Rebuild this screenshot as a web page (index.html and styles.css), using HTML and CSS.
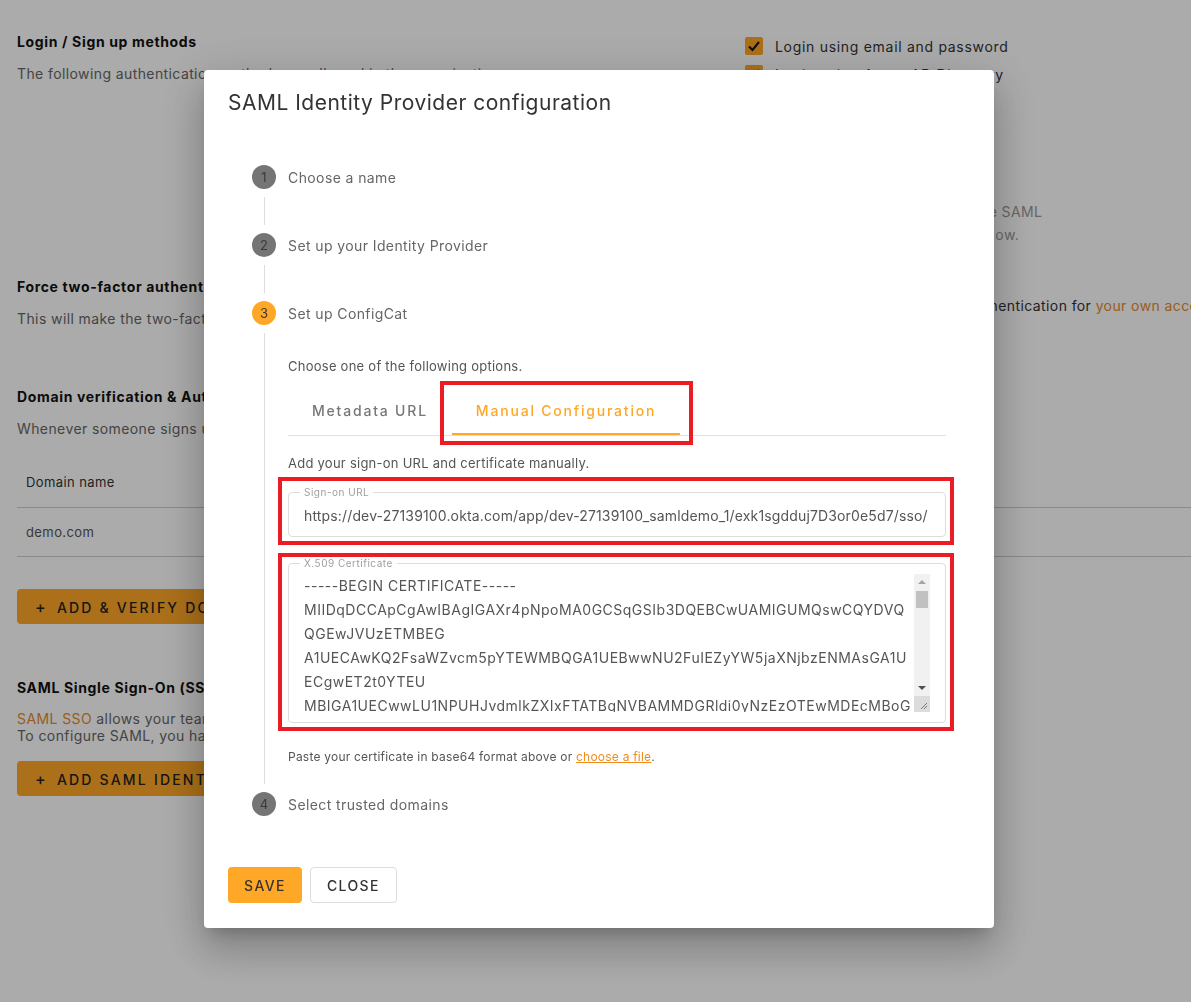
FILE: index.html
```html
<!DOCTYPE html>
<html lang="en">
<head>
  <meta charset="UTF-8" />
  <meta name="viewport" content="width=device-width, initial-scale=1.0"/>
  <title>Authentication settings</title>
  <link rel="stylesheet" href="styles.css">
</head>
<body>

  <!-- Settings page behind the dialog -->
  <div class="page">
    <section class="setting first">
      <div class="setting-info">
        <h4>Login / Sign up methods</h4>
        <p>The following authentication methods are allowed in the organization.</p>
      </div>
      <div class="setting-options">
        <label class="check">
          <span class="box"><svg viewBox="0 0 18 18"><polyline points="4,9.5 7.5,13 14,5"/></svg></span>
          Login using email and password
        </label>
        <label class="check">
          <span class="box"><svg viewBox="0 0 18 18"><polyline points="4,9.5 7.5,13 14,5"/></svg></span>
          Login using Azure AD Directory
        </label>
        <label class="check">
          <span class="box"><svg viewBox="0 0 18 18"><polyline points="4,9.5 7.5,13 14,5"/></svg></span>
          Login using Google
        </label>
        <label class="check">
          <span class="box"><svg viewBox="0 0 18 18"><polyline points="4,9.5 7.5,13 14,5"/></svg></span>
          Login using GitHub
        </label>
        <p class="note">Members from verified domains use SAML<br>SSO, so you can configure them below.</p>
      </div>
    </section>

    <section class="setting second">
      <div class="setting-info">
        <h4>Force two-factor authentication</h4>
        <p>This will make the two-factor authentication mandatory for every member of the organization.</p>
      </div>
      <div class="setting-options">
        <p class="plain">You can also enable two-factor authentication for <a href="#">your own account</a> first.</p>
      </div>
    </section>

    <section class="block">
      <h4>Domain verification &amp; Auto-assign</h4>
      <p>Whenever someone signs up with an email address from a verified domain, they will be added to the organization.</p>
      <div class="domain-table">
        <div class="domain-head">Domain name</div>
        <div class="domain-row">demo.com</div>
      </div>
      <button class="page-btn"><span class="plus">+</span>ADD &amp; VERIFY DOMAIN</button>
    </section>

    <section class="block saml">
      <h4>SAML Single Sign-On (SSO)</h4>
      <p class="tight"><a href="#">SAML SSO</a> allows your team members to log in to ConfigCat through your Identity Provider.<br>To configure SAML, you have to verify at least one domain first.</p>
      <button class="page-btn"><span class="plus">+</span>ADD SAML IDENTITY PROVIDER</button>
    </section>
  </div>

  <div class="backdrop"></div>

  <!-- SAML dialog -->
  <div class="dialog">
    <h2 class="dialog-title">SAML Identity Provider configuration</h2>

    <div class="stepper">
      <div class="step-head">
        <span class="step-num">1</span>
        <span>Choose a name</span>
      </div>
      <div class="step-line"></div>

      <div class="step-head">
        <span class="step-num">2</span>
        <span>Set up your Identity Provider</span>
      </div>
      <div class="step-line"></div>

      <div class="step-head">
        <span class="step-num active">3</span>
        <span>Set up ConfigCat</span>
      </div>
      <div class="step-body">
        <p class="hint">Choose one of the following options.</p>

        <div class="tabs">
          <div class="tab">Metadata URL</div>
          <div class="tab active">Manual Configuration<span class="mark"></span></div>
        </div>

        <p class="hint gap">Add your sign-on URL and certificate manually.</p>

        <div class="annotated url">
          <fieldset class="field">
            <legend>Sign-on URL</legend>
            <div class="field-value">https://dev-27139100.okta.com/app/dev-27139100_samldemo_1/exk1sgdduj7D3or0e5d7/sso/</div>
          </fieldset>
          <span class="mark"></span>
        </div>

        <div class="annotated cert">
          <fieldset class="field area">
            <legend>X.509 Certificate</legend>
            <div class="area-wrap">
              <div class="area-text">-----BEGIN CERTIFICATE-----
MIIDqDCCApCgAwIBAgIGAXr4pNpoMA0GCSqGSIb3DQEBCwUAMIGUMQswCQYDVQ
QGEwJVUzETMBEG
A1UECAwKQ2FsaWZvcm5pYTEWMBQGA1UEBwwNU2FuIEZyYW5jaXNjbzENMAsGA1U
ECgwET2t0YTEU
MBIGA1UECwwLU1NPUHJvdmlkZXIxFTATBgNVBAMMDGRldi0yNzEzOTEwMDEcMBoG</div>
              <div class="scrollbar">
                <span class="arrow up"></span>
                <span class="thumb"></span>
                <span class="track"></span>
                <span class="arrow down"></span>
                <span class="grip">
                  <svg viewBox="0 0 16 16"><line x1="13" y1="7" x2="7" y2="13"/><line x1="13" y1="10" x2="10" y2="13"/></svg>
                </span>
              </div>
            </div>
          </fieldset>
          <span class="mark"></span>
        </div>

        <p class="small">Paste your certificate in base64 format above or <a href="#">choose a file</a>.</p>
      </div>

      <div class="step-head">
        <span class="step-num">4</span>
        <span>Select trusted domains</span>
      </div>
    </div>

    <div class="actions">
      <button class="btn save">SAVE</button>
      <button class="btn close">CLOSE</button>
    </div>
  </div>

</body>
</html>
```

FILE: styles.css
```css
* {
  box-sizing: border-box;
  margin: 0;
  padding: 0;
  font-family: 'Inter', 'Noto Sans', sans-serif;
}

body {
  width: 1191px;
  height: 1002px;
  overflow: hidden;
  background: #fff;
  color: #333;
  font-size: 14px;
}

a {
  color: #f08c1e;
}

/* Page behind */
.page {
  width: 1191px;
  height: 1002px;
  overflow: hidden;
  padding: 32px 0 0 17px;
  letter-spacing: 0.4px;
}

.page h4 {
  font-size: 14px;
  font-weight: 700;
  line-height: 20px;
  color: #111;
  letter-spacing: 0.65px;
  white-space: nowrap;
}

.page p {
  margin-top: 12px;
  line-height: 20px;
  color: #666;
  white-space: nowrap;
}

.page a {
  color: #e58a2e;
  text-decoration: none;
}

.setting {
  display: grid;
  grid-template-columns: 728px 1fr;
}

.setting.second {
  margin-top: 31px;
}

.setting.second .setting-options {
  padding-top: 19px;
}

.check {
  display: flex;
  align-items: center;
  gap: 12px;
  height: 28px;
  color: #333;
  letter-spacing: 0.7px;
  white-space: nowrap;
}

.check .box {
  width: 18px;
  height: 18px;
  border-radius: 2px;
  background: #ffa726;
  display: flex;
}

.check svg {
  width: 18px;
  height: 18px;
  fill: none;
  stroke: #111;
  stroke-width: 2;
}

.setting-options .note {
  margin-top: 56px;
  line-height: 23px;
  color: #999;
}

.setting-options .plain {
  margin-top: 0;
  color: #333;
}

.block {
  margin-top: 58px;
}

.domain-table {
  margin-top: 18px;
  font-size: 13px;
}

.domain-head {
  height: 51px;
  line-height: 50px;
  padding-left: 9px;
  color: #333;
  border-bottom: 1px solid #ccc;
}

.domain-row {
  height: 49px;
  line-height: 48px;
  padding-left: 9px;
  color: #555;
  border-bottom: 1px solid #ccc;
}

.page-btn {
  margin-top: 32px;
  height: 35px;
  padding: 0 18px;
  border: none;
  border-radius: 4px;
  background: #ffa726;
  color: #222;
  font-size: 14px;
  font-weight: 500;
  letter-spacing: 2.2px;
  white-space: nowrap;
}

.page-btn .plus {
  margin-right: 9px;
  font-size: 16px;
}

.block.saml {
  margin-top: 54px;
}

.page p.tight {
  line-height: 17px;
}

.saml .page-btn {
  margin-top: 17px;
}

.backdrop {
  position: fixed;
  inset: 0;
  background: rgba(0, 0, 0, 0.33);
}

/* Dialog */
.dialog {
  position: fixed;
  left: 204px;
  top: 70px;
  width: 790px;
  height: 858px;
  padding: 17px 24px 25px;
  background: #fff;
  border-radius: 4px;
  box-shadow: 0 11px 15px -7px rgba(0,0,0,0.2), 0 24px 38px 3px rgba(0,0,0,0.14), 0 9px 46px 8px rgba(0,0,0,0.12);
}

.dialog-title {
  font-size: 21px;
  font-weight: 400;
  line-height: 32px;
  letter-spacing: 0.5px;
  color: #333;
  margin-bottom: 22px;
}

.stepper {
  padding: 24px;
}

.step-head {
  display: flex;
  align-items: center;
  gap: 12px;
  height: 24px;
  color: #666;
  font-size: 14px;
  letter-spacing: 0.4px;
}

.step-num {
  flex: none;
  width: 24px;
  height: 24px;
  border-radius: 50%;
  background: #757575;
  color: #3a3a3a;
  font-size: 13px;
  letter-spacing: 0;
  display: flex;
  align-items: center;
  justify-content: center;
}

.step-num.active {
  background: #ffa726;
}

.step-line {
  margin: 8px 0 8px 12px;
  height: 28px;
  border-left: 1px solid #ddd;
}

.step-body {
  margin: 8px 0 8px 12px;
  padding: 23px 0 18px 23px;
  border-left: 1px solid #ddd;
}

.hint {
  font-size: 13px;
  line-height: 20px;
  letter-spacing: 0.25px;
  color: #555;
}

.hint.gap {
  margin-top: 17px;
}

.tabs {
  display: flex;
  margin-top: 11px;
  border-bottom: 1px solid #e0e0e0;
}

.tab {
  position: relative;
  height: 48px;
  line-height: 48px;
  padding: 0 24px;
  font-size: 14px;
  font-weight: 500;
  letter-spacing: 1.8px;
  color: #777;
}

.tab.active {
  color: #ffa726;
}

.tab.active::after {
  content: "";
  position: absolute;
  left: 0;
  right: 0;
  bottom: 0;
  height: 2px;
  background: #ffa726;
}

/* red annotation frames */
.mark {
  position: absolute;
  border: 4px solid #ec1c24;
}

.tab .mark {
  top: -6px;
  bottom: -10px;
  left: -12px;
  right: -13px;
}

.annotated {
  position: relative;
}

.annotated.url {
  margin-top: 13px;
}

.annotated.cert {
  margin-top: 20px;
}

.annotated .mark {
  left: -10px;
  right: -8px;
  bottom: -8px;
}

.annotated.url .mark {
  top: -9px;
}

.annotated.cert .mark {
  top: -4px;
}

.field {
  border: 1px solid #ddd;
  border-radius: 4px;
  padding: 0 15px 2px;
}

.field legend {
  margin-left: -4px;
  padding: 0 4px;
  font-size: 10px;
  line-height: 12px;
  letter-spacing: 0.5px;
  color: #9e9e9e;
}

.field-value {
  height: 36px;
  line-height: 36px;
  letter-spacing: 0.15px;
  color: #555;
  white-space: nowrap;
  overflow: hidden;
}

.field.area {
  padding: 5px 15px 10px;
}

.area-wrap {
  display: flex;
  height: 138px;
}

.area-text {
  flex: 1;
  overflow: hidden;
  white-space: pre;
  line-height: 24px;
  letter-spacing: 0.5px;
  color: #555;
}

.scrollbar {
  width: 16px;
  display: flex;
  flex-direction: column;
  background: #f1f1f1;
}

.scrollbar .arrow {
  height: 16px;
  display: flex;
  align-items: center;
  justify-content: center;
}

.scrollbar .arrow::before {
  content: "";
  border-left: 4px solid transparent;
  border-right: 4px solid transparent;
}

.scrollbar .up::before {
  border-bottom: 4px solid #a3a3a3;
}

.scrollbar .down::before {
  border-top: 4px solid #505050;
}

.scrollbar .thumb {
  height: 17px;
  margin: 1px 2px 0;
  background: #c1c1c1;
}

.scrollbar .track {
  flex: 1;
}

.scrollbar .grip {
  height: 16px;
  background: #dcdcdc;
}

.grip svg {
  width: 16px;
  height: 16px;
  stroke: #777;
  stroke-width: 1;
}

.small {
  margin-top: 25px;
  font-size: 12px;
  line-height: 18px;
  letter-spacing: 0.22px;
  color: #555;
}

.actions {
  display: flex;
  gap: 8px;
  margin-top: 27px;
}

.btn {
  height: 36px;
  padding: 0 16px;
  border-radius: 4px;
  font-size: 14px;
  font-weight: 500;
  letter-spacing: 1.4px;
  color: #333;
}

.btn.save {
  background: #ffa726;
  border: none;
}

.btn.close {
  background: #fff;
  border: 1px solid #ddd;
}
```
